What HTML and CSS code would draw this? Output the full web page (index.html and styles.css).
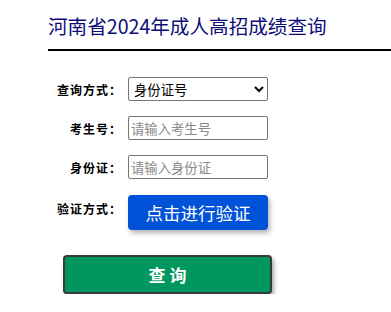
FILE: index.html
```html
<!DOCTYPE html>
<html lang="zh-CN">
<head>
<meta charset="utf-8">
<title>河南省2024年成人高招成绩查询</title>
<link rel="stylesheet" href="styles.css">
</head>
<body>
<div class="page">
  <h1 class="title">河南省2024年成人高招成绩查询</h1>
  <form class="form">
    <label class="label">查询方式：</label>
    <select class="control">
      <option>身份证号</option>
      <option>考生号</option>
    </select>
    <label class="label">考生号：</label>
    <input class="control" type="text" placeholder="请输入考生号">
    <label class="label">身份证：</label>
    <input class="control" type="text" placeholder="请输入身份证">
    <label class="label label-top">验证方式：</label>
    <button type="button" class="verify">点击进行验证</button>
  </form>
  <button type="button" class="submit">查 询</button>
</div>
</body>
</html>
```

FILE: styles.css
```css
html, body {
  margin: 0;
  padding: 0;
  background: #fff;
}
body {
  font-family: "Noto Sans CJK SC", "Liberation Sans", sans-serif;
}
.page {
  padding-top: 12px;
}
.title {
  margin: 0 0 0 48px;
  font-size: 19.6px;
  font-weight: normal;
  line-height: 28px;
  color: #0d0d7a;
  padding-bottom: 9px;
  border-bottom: 2px solid #000;
}
.form {
  display: grid;
  grid-template-columns: 121px 140px;
  column-gap: 7px;
  row-gap: 15px;
  margin-top: 26px;
  align-items: center;
}
.label {
  justify-self: end;
  font-size: 12px;
  font-weight: bold;
  letter-spacing: 1px;
  margin-right: -1px;
  color: #000;
}
.label-top {
  align-self: start;
  padding-top: 6px;
}
.control {
  box-sizing: border-box;
  width: 140px;
  height: 24px;
  margin: 0;
  border: 1px solid #767676;
  border-radius: 2px;
  font-family: "Noto Sans CJK SC", "Liberation Sans", sans-serif;
  font-size: 13.33px;
  padding: 0 2px;
  background: #fff;
  color: #000;
}
.control::placeholder {
  color: #8a8a8a;
}
select.control {
  padding: 0 1px;
}
.verify {
  box-sizing: border-box;
  width: 140px;
  height: 35px;
  margin: 1px 0 0;
  border: none;
  border-radius: 4px;
  background: #0052d9;
  color: #fff;
  font-family: "Noto Sans CJK SC", "Liberation Sans", sans-serif;
  font-size: 17.5px;
  box-shadow: 2px 3px 5px rgba(0, 0, 0, 0.3);
  padding: 0;
}
.submit {
  display: block;
  box-sizing: border-box;
  width: 209px;
  height: 39px;
  margin: 25px 0 0 63px;
  border: 2px solid #3a3a3a;
  border-radius: 4px;
  background: #00965f;
  color: #fff;
  font-family: "Noto Sans CJK SC", "Liberation Sans", sans-serif;
  font-size: 17px;
  font-weight: bold;
  box-shadow: 2px 3px 4px rgba(0, 0, 0, 0.35);
  padding: 0;
}
```
